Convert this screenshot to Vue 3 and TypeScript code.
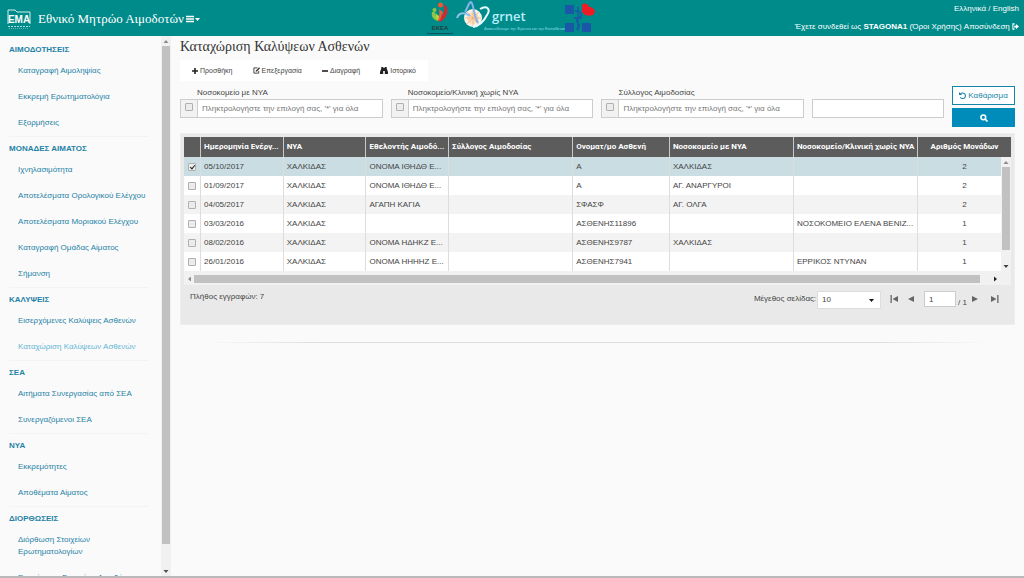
<script setup lang="ts">
import { ref } from 'vue'

interface MenuGroup {
  title: string
  items: string[]
}

interface Row {
  date: string
  nya: string
  donor: string
  club: string
  patient: string
  hospital: string
  clinic: string
  units: number
  checked: boolean
}

const active = 'Καταχώριση Καλύψεων Ασθενών'

const menu: MenuGroup[] = [
  { title: 'ΑΙΜΟΔΟΤΗΣΕΙΣ', items: ['Καταγραφή Αιμοληψίας', 'Εκκρεμή Ερωτηματολόγια', 'Εξορμήσεις'] },
  {
    title: 'ΜΟΝΑΔΕΣ ΑΙΜΑΤΟΣ',
    items: [
      'Ιχνηλασιμότητα',
      'Αποτελέσματα Ορολογικού Ελέγχου',
      'Αποτελέσματα Μοριακού Ελέγχου',
      'Καταγραφή Ομάδας Αίματος',
      'Σήμανση',
    ],
  },
  { title: 'ΚΑΛΥΨΕΙΣ', items: ['Εισερχόμενες Καλύψεις Ασθενών', active] },
  { title: 'ΣΕΑ', items: ['Αιτήματα Συνεργασίας από ΣΕΑ', 'Συνεργαζόμενοι ΣΕΑ'] },
  { title: 'ΝΥΑ', items: ['Εκκρεμότητες', 'Αποθέματα Αίματος'] },
  { title: 'ΔΙΟΡΘΩΣΕΙΣ', items: ['Διόρθωση Στοιχείων Ερωτηματολογίων', 'Ενημέρωση Στοιχείων Αιμοδότη'] },
]

const filters = ['Νοσοκομείο με ΝΥΑ', 'Νοσοκομείο/Κλινική χωρίς ΝΥΑ', 'Σύλλογος Αιμοδοσίας']
const hint = "Πληκτρολογήστε την επιλογή σας, '*' για όλα"

const columns = [
  'Ημερομηνία Ενέργ...',
  'ΝΥΑ',
  'Εθελοντής Αιμοδό...',
  'Σύλλογος Αιμοδοσίας',
  'Ονοματ/μο Ασθενή',
  'Νοσοκομείο με ΝΥΑ',
  'Νοσοκομείο/Κλινική χωρίς ΝΥΑ',
  'Αριθμός Μονάδων',
]

const rows = ref<Row[]>([
  { date: '05/10/2017', nya: 'ΧΑΛΚΙΔΑΣ', donor: 'ΟΝΟΜΑ ΙΘΗΔΘ Ε...', club: '', patient: 'Α', hospital: 'ΧΑΛΚΙΔΑΣ', clinic: '', units: 2, checked: true },
  { date: '01/09/2017', nya: 'ΧΑΛΚΙΔΑΣ', donor: 'ΟΝΟΜΑ ΙΘΗΔΘ Ε...', club: '', patient: 'Α', hospital: 'ΑΓ. ΑΝΑΡΓΥΡΟΙ', clinic: '', units: 2, checked: false },
  { date: '04/05/2017', nya: 'ΧΑΛΚΙΔΑΣ', donor: 'ΑΓΑΠΗ ΚΑΓΙΑ', club: '', patient: 'ΣΦΑΣΦ', hospital: 'ΑΓ. ΟΛΓΑ', clinic: '', units: 2, checked: false },
  { date: '03/03/2016', nya: 'ΧΑΛΚΙΔΑΣ', donor: '', club: '', patient: 'ΑΣΘΕΝΗΣ11896', hospital: '', clinic: 'ΝΟΣΟΚΟΜΕΙΟ ΕΛΕΝΑ ΒΕΝΙΖ...', units: 1, checked: false },
  { date: '08/02/2016', nya: 'ΧΑΛΚΙΔΑΣ', donor: 'ΟΝΟΜΑ ΗΔΗΚΖ Ε...', club: '', patient: 'ΑΣΘΕΝΗΣ9787', hospital: 'ΧΑΛΚΙΔΑΣ', clinic: '', units: 1, checked: false },
  { date: '26/01/2016', nya: 'ΧΑΛΚΙΔΑΣ', donor: 'ΟΝΟΜΑ ΗΗΗΗΖ Ε...', club: '', patient: 'ΑΣΘΕΝΗΣ7941', hospital: '', clinic: 'ΕΡΡΙΚΟΣ ΝΤΥΝΑΝ', units: 1, checked: false },
])
</script>

<template>
  <div class="page">
    <header class="top">
      <div class="brand">
        <svg class="ema" viewBox="0 0 24 22" role="img" aria-label="ΕΜΑ">
          <path d="M1 16V2h7l2 2h13v12" fill="none" stroke="#d5eeee" stroke-width="1" />
          <text x="12" y="15" text-anchor="middle" class="ema-name">EMA</text>
          <path d="M1 18.500h22" stroke="#a9dcdc" stroke-dasharray="2 1" />
          <path d="M2 20.500h20" stroke="#5cb8b8" stroke-dasharray="1 1" />
        </svg>
        <a href="#" class="brand-name">Εθνικό Μητρώο Αιμοδοτών</a>
        <button type="button" class="burger" aria-label="Μενού">
          <svg width="14" height="8" viewBox="0 0 14 8">
            <path d="M0 1.500h8M0 4h8M0 6.500h8" stroke="#fff" stroke-width="1.400" />
            <path d="M9 3h5l-2.500 3z" fill="#fff" />
          </svg>
        </button>
      </div>
      <div class="logos">
        <svg class="ekea" viewBox="0 0 28 35" role="img" aria-label="ΕΚΕΑ">
          <circle cx="8.500" cy="10" r="2" fill="#8fc641" />
          <path d="M6 12c-1 4 1 8 6 9l1-3c-3-1-5-3-4-6z" fill="#8fc641" />
          <path d="M9 13l4 3 0 5-3-3z" fill="#b4d443" />
          <circle cx="14.500" cy="5" r="2.500" fill="#f0562f" />
          <path d="M20 5c3 6 1 13-6 17l-2-2c5-4 7-9 6-14z" fill="#d8272f" />
          <path d="M13 9l4 3-3 8-2 1c1-4 2-8 1-12z" fill="#e9603c" />
          <text x="14" y="30" text-anchor="middle" class="ekea-name">ΕΚΕΑ</text>
          <path d="M1 33.500h26" stroke="#07545a" />
        </svg>
        <svg class="grnet" viewBox="0 0 108 35" role="img" aria-label="grnet">
          <circle cx="17" cy="18" r="9" fill="#f6f4ea" />
          <circle cx="17" cy="18" r="6" fill="#fbdcb6" />
          <path d="M17 10v16M9 18h16M11 12l12 12M23 12l-12 12" stroke="#f1a56b" stroke-width=".6" />
          <path d="M24 9c7-4 11 0 7 6-3 6-8 11-14 12" fill="none" stroke="#eafaff" stroke-width="2" />
          <path d="M1 18c2-6 8-6 13-2" fill="none" stroke="#8cc0ee" stroke-width="2" />
          <path d="M9 12c3-4 3-9 6-10 3 2 2 12 7 21" fill="none" stroke="#86b2ec" stroke-width="2" />
          <text x="36" y="21" class="grnet-name">grnet</text>
          <text x="28" y="30" class="grnet-line">Διασυνδέουμε την Έρευνα και την Εκπαίδευση</text>
        </svg>
        <svg class="cross" viewBox="0 0 32 32" role="img" aria-label="Αιμοδοσία">
          <path d="M1 3h9v9H1zM1 21h9v9H1zM18 21h9v9h-9z" fill="#1b57a8" />
          <path d="M14 4v25M11 9c6 0 8 3 5 6s-5 3-2 6 1 5-2 6M10 16h8" fill="none" stroke="#1b57a8" stroke-width="1.300" />
          <path d="M18 3c3-3 6-1 7 2 3 0 6 2 6 5l-2 3c-4 2-9 0-11-3z" fill="#ee1c25" />
        </svg>
      </div>
      <div class="session">
        <div><a href="#">Ελληνικά</a> / <a href="#">English</a></div>
        <div>
          Έχετε συνδεθεί ως <strong>STAGONA1</strong> (<a href="#">Όροι Χρήσης</a>)
          <a href="#">Αποσύνδεση
            <svg width="7" height="7" viewBox="0 0 8 8">
              <path d="M3 1H1v6h2" fill="none" stroke="#fff" stroke-width="1.200" />
              <path d="M2.500 3h2V1L8 4 4.500 7V5h-2z" fill="#fff" />
            </svg></a>
        </div>
      </div>
    </header>

    <div class="body">
      <nav class="side">
        <section v-for="g in menu" :key="g.title" class="group">
          <h2>{{ g.title }}</h2>
          <ul>
            <li v-for="i in g.items" :key="i">
              <a href="#" :class="{ current: i === active }">{{ i }}</a>
            </li>
          </ul>
        </section>
      </nav>
      <div class="bar bar-y side-bar" aria-hidden="true">
        <svg viewBox="0 0 10 10"><path d="M5 4l2.500 3h-5z" fill="#8b8b8b" /></svg>
        <span class="thumb side-thumb"></span>
        <span class="rest"></span>
        <svg viewBox="0 0 10 10"><path d="M5 7L2.500 4h5z" fill="#505050" /></svg>
      </div>

      <main class="main">
        <h1>Καταχώριση Καλύψεων Ασθενών</h1>

        <div class="tools">
          <button type="button">
            <svg width="6" height="6" viewBox="0 0 6 6"><path d="M3 0v6M0 3h6" stroke="#222" stroke-width="1.600" /></svg>Προσθήκη
          </button>
          <button type="button">
            <svg width="7" height="7" viewBox="0 0 8 8">
              <path d="M5 1H1v6h5.500V4.500" fill="none" stroke="#333" />
              <path d="M3 5.500l.4-1.600L7 .3 8 1.500 4.500 5z" fill="#333" />
            </svg>Επεξεργασία
          </button>
          <button type="button">
            <svg width="6" height="6" viewBox="0 0 6 6"><path d="M0 3h6" stroke="#222" stroke-width="1.600" /></svg>Διαγραφή
          </button>
          <button type="button">
            <svg width="8" height="7" viewBox="0 0 8 7">
              <path d="M1.300 0h2v1h1.400V0h2v1.500L8 5v2H4.800V4H3.200v3H0V5l1.300-3.500z" fill="#222" />
            </svg>Ιστορικό
          </button>
        </div>

        <form class="filters" @submit.prevent>
          <div v-for="(f, n) in filters" :key="f" class="field">
            <label :for="'filter' + n">{{ f }}</label>
            <div class="combo">
              <span class="addon"><input type="checkbox" :aria-label="f" /></span>
              <input :id="'filter' + n" type="text" :placeholder="hint" />
            </div>
          </div>
          <div class="field">
            <div class="combo"><input type="text" aria-label="Αναζήτηση" /></div>
          </div>
          <div class="actions">
            <button type="reset" class="clear">
              <svg width="7" height="7" viewBox="0 0 8 8">
                <path d="M1.500 2.500a3.200 3.200 0 1 1 0 3.500" fill="none" stroke="#1585a8" stroke-width="1.200" />
                <path d="M0 0v3.500h3.500z" fill="#1585a8" />
              </svg>Καθάρισμα
            </button>
            <button type="submit" class="search" aria-label="Αναζήτηση">
              <svg width="8" height="8" viewBox="0 0 8 8">
                <circle cx="3.300" cy="3.300" r="2.400" fill="none" stroke="#fff" stroke-width="1.500" />
                <path d="M5 5l2.500 2.500" stroke="#fff" stroke-width="1.700" />
              </svg>
            </button>
          </div>
        </form>

        <div class="panel">
          <div class="grid">
            <table>
              <colgroup>
                <col class="c-check" /><col class="c-date" /><col class="c-nya" /><col class="c-nya" />
                <col class="c-wide" /><col class="c-patient" /><col class="c-wide" /><col class="c-wide" /><col />
              </colgroup>
              <thead>
                <tr>
                  <th></th>
                  <th v-for="c in columns" :key="c" scope="col">{{ c }}</th>
                </tr>
              </thead>
              <tbody>
                <tr v-for="r in rows" :key="r.date" :class="{ picked: r.checked }">
                  <td><input v-model="r.checked" type="checkbox" :aria-label="r.date" /></td>
                  <td>{{ r.date }}</td>
                  <td>{{ r.nya }}</td>
                  <td>{{ r.donor }}</td>
                  <td>{{ r.club }}</td>
                  <td>{{ r.patient }}</td>
                  <td>{{ r.hospital }}</td>
                  <td>{{ r.clinic }}</td>
                  <td>{{ r.units }}</td>
                </tr>
              </tbody>
            </table>
            <div class="bar bar-y grid-bar" aria-hidden="true">
              <svg viewBox="0 0 10 10"><path d="M5 4l2.500 3h-5z" fill="#8b8b8b" /></svg>
              <span class="thumb grid-thumb"></span>
              <span class="rest"></span>
              <svg viewBox="0 0 10 10"><path d="M5 7L2.500 4h5z" fill="#404040" /></svg>
            </div>
          </div>
          <div class="bar bar-x" aria-hidden="true">
            <svg viewBox="0 0 10 10"><path d="M4 5l3-2.500v5z" fill="#8b8b8b" /></svg>
            <span class="thumb x-thumb"></span>
            <span class="rest"></span>
            <svg viewBox="0 0 10 10"><path d="M7 5L4 2.500v5z" fill="#222" /></svg>
          </div>
          <div class="foot">
            <span class="count">Πλήθος εγγραφών: 7</span>
            <div class="pager">
              <label for="size">Μέγεθος σελίδας:</label>
              <div class="pick">
                <select id="size"><option>10</option><option>20</option></select>
                <svg width="5" height="3" viewBox="0 0 5 3"><path d="M0 0h5L2.500 3z" fill="#111" /></svg>
              </div>
              <button type="button" aria-label="Πρώτη"><svg width="8" height="8" viewBox="0 0 8 8"><path d="M.5 0h1.300v8H.5zM8 1v6L2.500 4z" fill="#666" /></svg></button>
              <button type="button" aria-label="Προηγούμενη"><svg width="8" height="8" viewBox="0 0 8 8"><path d="M7 1v6L1 4z" fill="#666" /></svg></button>
              <input type="text" value="1" aria-label="Σελίδα" />
              <span class="total">/ 1</span>
              <button type="button" aria-label="Επόμενη"><svg width="8" height="8" viewBox="0 0 8 8"><path d="M1 1v6l6-3z" fill="#666" /></svg></button>
              <button type="button" aria-label="Τελευταία"><svg width="8" height="8" viewBox="0 0 8 8"><path d="M6.200 0h1.300v8H6.200zM0 1v6l5.500-3z" fill="#666" /></svg></button>
            </div>
          </div>
        </div>
        <hr />
      </main>
    </div>
  </div>
</template>

<style>
body {
  margin: 0;
  background: #fafafa;
}
</style>

<style scoped>
.page {
  box-sizing: border-box;
  display: flex;
  flex-direction: column;
  height: 100vh;
  overflow: hidden;
  border-bottom: 2px solid #b9b9b9;
  font: 8px/12px "Liberation Sans", Arial, sans-serif;
  color: #444;
}
.page *,
.page *::before {
  box-sizing: border-box;
}
button,
input,
select {
  margin: 0;
  font: inherit;
  color: inherit;
}
button {
  padding: 0;
  border: 0;
  background: none;
}
a {
  color: inherit;
  text-decoration: none;
}
svg {
  display: block;
}

.top {
  display: grid;
  grid-template-columns: 1fr auto 1fr;
  flex: none;
  height: 36px;
  padding: 0 5px 0 7px;
  background: #008b8b;
  color: #fff;
}
.brand {
  display: flex;
  align-items: center;
  padding-top: 2px;
}
.ema {
  width: 24px;
  height: 22px;
  margin-right: 7px;
}
.ema-name {
  font: bold 10px "Liberation Sans", sans-serif;
  fill: #fff;
}
.brand-name {
  margin-right: 2px;
  font: 13px/18px "Liberation Serif", serif;
}
.logos {
  display: flex;
  align-items: flex-start;
  padding-right: 4px;
}
.ekea {
  width: 28px;
  height: 35px;
}
.ekea-name {
  font: bold 6px "Liberation Sans", sans-serif;
  fill: #243f3c;
}
.grnet {
  width: 108px;
  height: 35px;
  margin-left: 2px;
  overflow: visible;
}
.grnet-name {
  font: 600 13px "Open Sans", sans-serif;
  fill: #b9eefa;
}
.grnet-line {
  font: 4px "Liberation Sans", sans-serif;
  fill: #8fdce0;
}
.cross {
  width: 32px;
  height: 32px;
  margin-top: 2px;
}
.session {
  display: flex;
  flex-direction: column;
  gap: 6px;
  padding-top: 3px;
  text-align: right;
}
.session svg {
  display: inline;
  vertical-align: -1px;
}

.body {
  display: flex;
  flex: 1;
  min-height: 0;
}
.side {
  flex: none;
  width: 161px;
  padding: 6px 13px 0 9px;
  overflow: hidden;
  color: #1f82a6;
}
.group + .group {
  padding-top: 4px;
  border-top: 1px solid #f3f3f3;
}
.side h2 {
  margin: 0;
  font-size: 8px;
  font-weight: bold;
  line-height: 16px;
}
.side ul {
  margin: 0;
  padding: 0 0 0 9px;
  list-style: none;
}
.side li {
  padding: 7px 0;
}
.side a {
  display: block;
}
.side .current {
  color: #63b5d3;
}

.bar {
  display: flex;
  background: #f1f1f1;
}
.bar svg {
  flex: none;
  width: 10px;
  height: 10px;
}
.bar-y {
  flex-direction: column;
  align-items: center;
  width: 10px;
}
.bar-y .thumb {
  width: 8px;
}
.thumb {
  background: #c1c1c1;
}
.rest {
  flex: 22;
}
.side-bar {
  flex: none;
}
.side-thumb {
  flex: 495;
}

.main {
  flex: 1;
  min-width: 0;
  padding: 2px 9px 0;
}
h1 {
  margin: 0;
  font: 14px/18px "Liberation Serif", serif;
  color: #333;
}
.tools {
  display: flex;
  justify-content: space-between;
  width: 248px;
  height: 21px;
  margin-top: 4px;
  padding: 0 12px;
  background: #fff;
  font-size: 7px;
}
.tools button {
  display: flex;
  align-items: center;
  gap: 2px;
}
.filters {
  display: grid;
  grid-template-columns: 203fr 203fr 203fr 132fr 63fr;
  align-items: end;
  gap: 8px;
  margin-top: 5px;
}
.field {
  padding-bottom: 9px;
}
.field label {
  display: block;
  padding-left: 17px;
}
.combo {
  display: flex;
  height: 19px;
  border: 1px solid #ccc;
  background: #fff;
}
.combo input[type="text"] {
  flex: 1;
  min-width: 0;
  padding: 0 4px;
  border: 0;
  background: none;
}
input::placeholder {
  color: #777;
  opacity: 1;
}
.addon {
  display: flex;
  flex: none;
  justify-content: center;
  width: 17px;
  padding-top: 3px;
  border-right: 1px solid #ccc;
  background: #f2f2f2;
}
input[type="checkbox"] {
  appearance: none;
  display: block;
  width: 8px;
  height: 8px;
  border: 1px solid #b0b0b0;
  border-radius: 1px;
  background: #ececec;
}
input[type="checkbox"]:checked::before {
  content: "";
  display: block;
  width: 3px;
  height: 5px;
  margin-left: 2px;
  border: solid #222;
  border-width: 0 1px 1px 0;
  transform: rotate(40deg);
}
.actions {
  display: flex;
  flex-direction: column;
  gap: 3px;
}
.actions button {
  display: flex;
  align-items: center;
  justify-content: center;
  gap: 2px;
  height: 19px;
  border: 1px solid #1585a8;
}
.clear {
  background: #fff;
  color: #1585a8;
}
.actions .search {
  border-color: #008cba;
  background: #008cba;
}

.panel {
  margin-top: 6px;
  padding: 3px;
  border: 1px solid #eee;
  background: #e9e9e9;
}
.grid {
  position: relative;
  background: #fff;
}
table {
  width: 100%;
  table-layout: fixed;
  border-collapse: collapse;
}
.c-check {
  width: 2%;
}
.c-date {
  width: 10%;
}
.c-nya {
  width: 10%;
}
.c-wide {
  width: 15%;
}
.c-patient {
  width: 11.7%;
}
th,
td {
  height: 19px;
  padding: 0 0 0 3px;
  overflow: hidden;
  border-left: 1px solid #ddd;
  text-align: left;
  text-overflow: ellipsis;
  white-space: nowrap;
}
th {
  height: 20px;
  border-color: #c9c9c9;
  background: #5c5c5c;
  color: #fff;
  font-family: Roboto, "Liberation Sans", sans-serif;
  font-weight: bold;
}
th:first-child,
td:first-child {
  border-left: 0;
}
th:last-child,
td:last-child {
  padding: 0;
  text-align: center;
}
td input[type="checkbox"] {
  margin-left: 1px;
}
tbody tr:nth-child(odd) {
  background: #f3f3f3;
}
tbody tr:nth-child(even) {
  background: #fff;
}
tbody tr.picked {
  background: #c9dde3;
}
.grid-bar {
  position: absolute;
  top: 20px;
  right: 0;
  bottom: 0;
}
.grid-thumb {
  flex: 84;
}
.grid-bar .rest {
  flex: 11;
}
.bar-x {
  align-items: center;
  height: 14px;
  padding-top: 2px;
  padding-right: 11px;
}
.bar-x .thumb {
  flex: 785;
  height: 8px;
}
.bar-x .rest {
  flex: 10;
}
.foot {
  display: flex;
  justify-content: space-between;
  padding: 6px 12px 12px 6px;
}
.pager {
  display: flex;
  align-items: flex-start;
}
.pager label {
  padding: 2px 1px 0 0;
}
.pick {
  display: flex;
  align-items: center;
  width: 64px;
  height: 18px;
  padding-right: 6px;
  border: 1px solid #ddd;
  background: #fff;
}
.pick select {
  flex: 1;
  appearance: none;
  padding: 0 4px;
  border: 0;
  background: none;
}
.pager button {
  padding: 4px 0;
  margin-left: 9px;
}
.pager input {
  width: 32px;
  height: 16px;
  margin-left: 9px;
  padding: 0 4px;
  border: 1px solid #ccc;
  background: #fff;
}
.total {
  padding: 6px 0 0 2px;
}
.total + button {
  margin-left: 4px;
}
.pager button:last-child {
  margin-left: 12px;
}
hr {
  height: 1px;
  margin: 17px 24px 0;
  border: 0;
  background: linear-gradient(90deg, transparent, #ddd 15%, #ddd 85%, transparent);
}
</style>
